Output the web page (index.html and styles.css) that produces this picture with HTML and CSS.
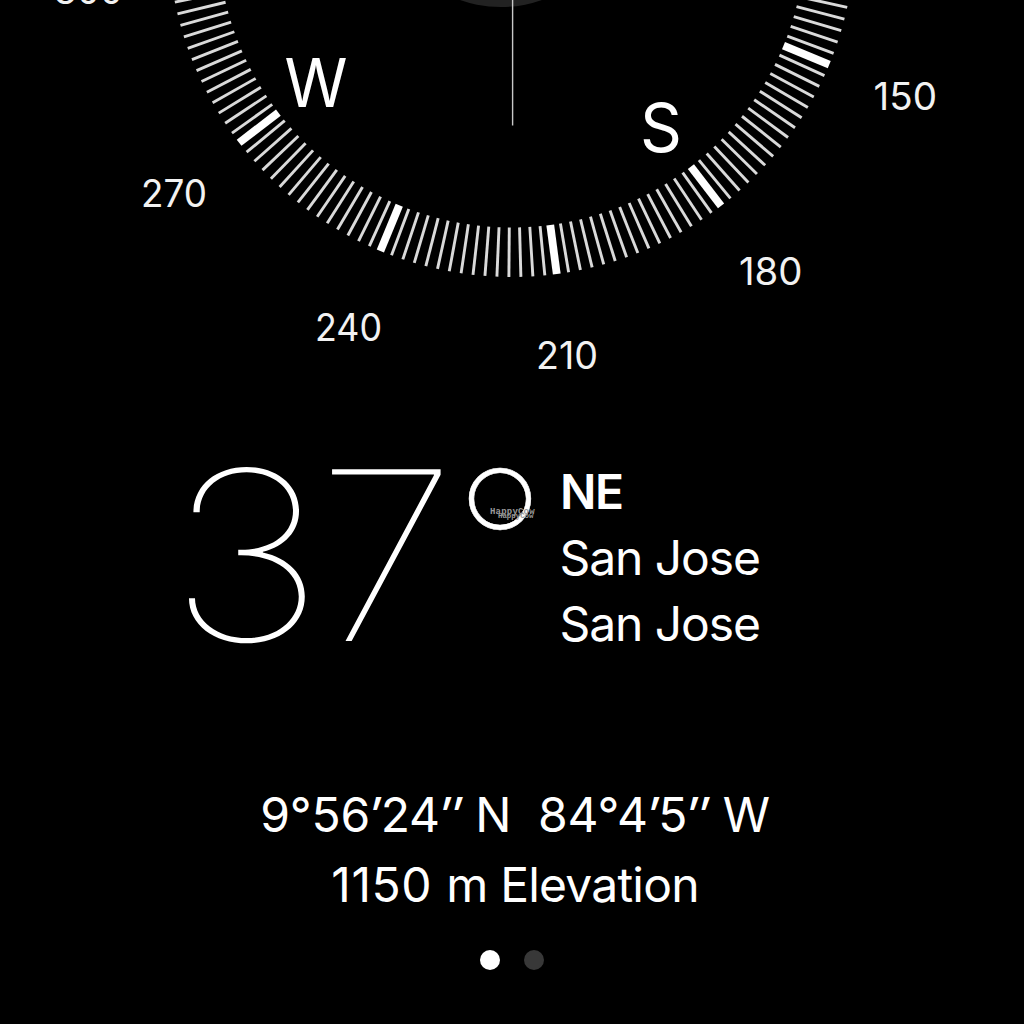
FILE: index.html
```html
<!DOCTYPE html>
<html lang="en">
<head>
<meta charset="utf-8">
<title>Compass</title>
<link rel="stylesheet" href="styles.css">
</head>
<body>
<main class="compass">
  <svg class="dial" width="1024" height="440" viewBox="0 0 1024 440">
    <circle class="level" cx="501" cy="-116.5" r="123.5"/>
    <g id="ticks"></g>
    <path class="crosshair" d="M512.6 0V125.5"/>
    <g class="cardinal">
      <text x="284.5" y="106.5" textLength="63" lengthAdjust="spacingAndGlyphs">W</text>
      <text x="640" y="151.8" textLength="42" lengthAdjust="spacingAndGlyphs">S</text>
    </g>
    <g class="degrees">
      <text x="54" y="3.5" textLength="69" lengthAdjust="spacingAndGlyphs">300</text>
      <text x="141" y="206.8" textLength="66" lengthAdjust="spacingAndGlyphs">270</text>
      <text x="315" y="340.8" textLength="67" lengthAdjust="spacingAndGlyphs">240</text>
      <text x="536" y="369" textLength="62" lengthAdjust="spacingAndGlyphs">210</text>
      <text x="739" y="284.6" textLength="63.5" lengthAdjust="spacingAndGlyphs">180</text>
      <text x="873.5" y="109.6" textLength="63.5" lengthAdjust="spacingAndGlyphs">150</text>
    </g>
  </svg>
  <section class="reading">
    <div class="heading"><span class="digit three">3</span><span class="digit seven">7</span><span class="degree">°</span>
      <span class="mark mark-large">HappyCow</span><span class="mark mark-small">HappyCow</span>
    </div>
    <div class="place">
      <strong>NE</strong>
      <span>San Jose</span>
      <span>San Jose</span>
    </div>
  </section>
  <section class="position">
    <div class="coords">9°56<span class="prime">′</span>24<span class="prime">″</span> N&nbsp; 84°4<span class="prime">′</span>5<span class="prime">″</span> W</div>
    <div class="elevation"><span class="amount">1150</span><span class="unit">m</span><span class="label">Elevation</span></div>
  </section>
  <nav class="pages"><i class="dot active"></i><i class="dot"></i></nav>
</main>
<script src="dial.js"></script>
</body>
</html>
```
FILE: styles.css
```css
* { box-sizing: border-box; }
body { margin: 0; background: #000; }
.compass {
  width: 1024px; height: 1024px; overflow: hidden;
  display: flex; flex-direction: column;
  background: #000; color: #fff;
  font-family: Inter, "Liberation Sans", sans-serif;
}
.dial { display: block; flex: none; }
.level { fill: #222; }
.crosshair { stroke: #c8c8c8; stroke-width: 1.4; fill: none; }
.tick { stroke: #dadada; stroke-width: 2.9; }
.tick-major { stroke: #fff; stroke-width: 7.8; }
.cardinal { fill: #fff; font-size: 67px; }
.degrees { fill: #f2f2f2; font-size: 37.5px; }
.reading { display: flex; height: 240px; padding-left: 180px; flex: none; }
.heading {
  position: relative; display: flex; width: 380px;
  font-size: 236px; line-height: 230px; font-weight: 100;
}
.digit { width: 142px; transform-origin: 0 0; }
.three { transform: translateX(-12px) scaleX(1.137); }
.seven { transform: translateX(-6px) scaleX(1.09); }
.degree {
  margin: -9.5px 0 0 -11.5px; font-size: 209px; -webkit-text-stroke: 0.5px #fff;
}
.mark {
  position: absolute; color: #999;
  font-family: "Liberation Mono", monospace; font-weight: 700; line-height: 10px;
}
.mark-large { left: 310px; top: 67px; font-size: 9px; letter-spacing: 0.2px; }
.mark-small { left: 318px; top: 71px; font-size: 7.4px; }
.place {
  display: flex; flex-direction: column; padding-top: 19px;
  font-size: 48px; line-height: 66px; letter-spacing: -1.1px;
}
.place span { margin-left: -0.5px; }
.place strong { font-weight: 600; letter-spacing: -1.5px; }
.position {
  flex: none; display: flex; flex-direction: column; align-items: center;
  padding-top: 100px; padding-left: 6px; font-size: 48px; line-height: 70px;
}
.coords, .elevation { white-space: nowrap; }
.coords { letter-spacing: -0.15px; }
.prime { display: inline-block; transform: skewX(-8deg); font-weight: 500; letter-spacing: -1px; }
.elevation { display: flex; gap: 13px; }
.amount { letter-spacing: 0.6px; }
.unit { margin-left: 1px; letter-spacing: -1px; }
.label { letter-spacing: -0.8px; }
.pages { display: flex; gap: 24px; justify-content: center; padding-top: 30px; }
.dot { width: 20px; height: 20px; border-radius: 50%; background: #383838; }
.dot.active { background: #fff; }
```
FILE: dial.js
```js
const center = { x: 511.6, y: -66.7 };
const inner = 294.2;
const outer = 343.7;
const south = 37.55;
const ticks = document.getElementById("ticks");

for (let degree = 130; degree <= 310; degree += 2) {
  const angle = (south + 180 - degree) * Math.PI / 180;
  const line = document.createElementNS("http://www.w3.org/2000/svg", "line");
  line.setAttribute("x1", center.x + inner * Math.sin(angle));
  line.setAttribute("y1", center.y + inner * Math.cos(angle));
  line.setAttribute("x2", center.x + outer * Math.sin(angle));
  line.setAttribute("y2", center.y + outer * Math.cos(angle));
  line.setAttribute("class", degree % 30 === 0 ? "tick tick-major" : "tick");
  ticks.appendChild(line);
}
```
